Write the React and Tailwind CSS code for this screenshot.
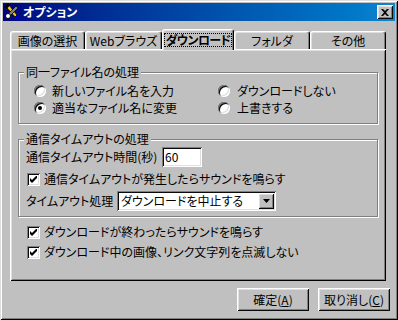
import React from "react";

const raised =
  "shadow-[inset_1px_1px_#fff,inset_-1px_-1px_#0a0a0a,inset_2px_2px_#dfdfdf,inset_-2px_-2px_#808080]";
const sunken =
  "shadow-[inset_1px_1px_#808080,inset_-1px_-1px_#fff,inset_2px_2px_#0a0a0a,inset_-2px_-2px_#dfdfdf]";
const etched = "border border-[#808080] shadow-[1px_1px_0_#fff,inset_1px_1px_0_#fff]";

const Radio = ({ checked }) => (
  <span className={`w-[12px] h-[12px] rounded-full bg-white shrink-0 flex items-center justify-center ${sunken}`}>
    {checked && <span className="w-[4px] h-[4px] rounded-full bg-black" />}
  </span>
);

const Check = () => (
  <span className={`w-[13px] h-[13px] bg-white shrink-0 flex items-center justify-center ${sunken}`}>
    <svg width="7" height="7" viewBox="0 0 7 7">
      <path d="M0 2 L2 4 L6 0 L7 0 L7 2 L2 7 L0 5 Z" fill="#000" />
    </svg>
  </span>
);

const Group = ({ title, className, children }) => (
  <div className={`relative ${etched} ${className}`}>
    <span className="absolute -top-[8px] left-[5px] px-[2px] bg-[#c0c0c0] leading-[14px]">{title}</span>
    {children}
  </div>
);

const Tab = ({ label, w, selected }) => (
  <div
    className={`${w} flex items-center justify-center bg-[#c0c0c0] rounded-t-[3px] border-l border-t border-white border-r border-r-black shadow-[inset_-1px_0_#808080,inset_1px_1px_#dfdfdf] ${
      selected ? "h-[21px] -mb-[1px] relative z-10" : "h-[18px]"
    }`}
  >
    {selected ? (
      <span className="outline-1 outline-dotted outline-black px-[1px] leading-[12px] font-bold tracking-[-0.6px]">{label}</span>
    ) : (
      label
    )}
  </div>
);

const TitleIcon = () => (
  <svg width="16" height="16" viewBox="0 0 16 16">
    <path d="M2 1 L5 1 L13 11 L11 13 L3 4 Z" fill="#e8c020" stroke="#000" strokeWidth="0.8" />
    <rect x="1" y="1" width="5" height="3" fill="#000" transform="rotate(-40 3 3)" />
    <path d="M12 2 L14 4 L6 12 L4 10 Z" fill="#808080" stroke="#000" strokeWidth="0.8" />
    <circle cx="4" cy="12" r="2.5" fill="#fff" stroke="#000" strokeWidth="1" />
    <rect x="11" y="12" width="5" height="4" fill="#0000c0" />
  </svg>
);

export default function App() {
  return (
    <div className="w-[398px] h-[320px] bg-[#c0c0c0] p-[3px] flex flex-col whitespace-nowrap text-[12px] leading-[14px] text-black font-['Noto_Sans_CJK_JP',sans-serif] [font-feature-settings:'palt'] shadow-[inset_1px_1px_#dfdfdf,inset_-1px_-1px_#000,inset_2px_2px_#fff,inset_-2px_-2px_#808080]">
      <div className="h-[18px] bg-linear-to-r from-[#000080] to-[#1084d0] flex items-center pl-[1px] pr-[2px]">
        <TitleIcon />
        <span className="ml-[3px] text-white font-bold">オプション</span>
        <button className={`ml-auto w-[16px] h-[14px] bg-[#c0c0c0] flex items-center justify-center ${raised}`}>
          <svg width="8" height="7" viewBox="0 0 8 7">
            <path d="M0 0h2l2 2 2-2h2L5 3.5 8 7H6L4 5 2 7H0l3-3.5z" fill="#000" />
          </svg>
        </button>
      </div>

      <div className="mt-[7px] ml-[7px] flex items-end h-[21px]">
        <Tab label="画像の選択" w="w-[75px]" />
        <Tab label="Webブラウズ" w="w-[77px]" />
        <Tab label="ダウンロード" w="w-[72px]" selected />
        <Tab label="フォルダ" w="w-[76px]" />
        <Tab label="その他" w="w-[76px]" />
      </div>

      <div className="ml-[7px] w-[376px] h-[232px] pt-[23px] px-[8px] flex flex-col shadow-[inset_1px_1px_#fff,inset_-1px_-1px_#000,inset_2px_2px_#dfdfdf,inset_-2px_-2px_#808080]">
        <Group title="同一ファイル名の処理" className="h-[52px] pt-[9px] pl-[15px]">
          <div className="grid grid-cols-[184px_1fr] auto-rows-[17px]">
            <label className="flex items-center gap-[6px]"><Radio />新しいファイル名を入力</label>
            <label className="flex items-center gap-[7px]"><Radio />ダウンロードしない</label>
            <label className="flex items-center gap-[6px]"><Radio checked />適当なファイル名に変更</label>
            <label className="flex items-center gap-[7px]"><Radio />上書きする</label>
          </div>
        </Group>

        <Group title="通信タイムアウトの処理" className="mt-[15px] h-[78px] pt-[7px] pl-[7px] flex flex-col gap-[3px]">
          <div className="flex items-center h-[20px]">
            <span className="w-[136px]">通信タイムアウト時間(秒)</span>
            <div className={`w-[40px] h-[20px] bg-white flex items-center pl-[3px] ${sunken}`}>60</div>
          </div>
          <label className="flex items-center h-[18px] ml-[1px] gap-[4px]"><Check />通信タイムアウトが発生したらサウンドを鳴らす</label>
          <div className="flex items-center h-[20px]">
            <span className="w-[91px]">タイムアウト処理</span>
            <div className={`w-[159px] h-[20px] bg-white flex items-center p-[2px] ${sunken}`}>
              <span className="flex-1 pl-[2px]">ダウンロードを中止する</span>
              <span className={`w-[16px] h-[16px] bg-[#c0c0c0] flex items-center justify-center ${raised}`}>
                <svg width="7" height="4" viewBox="0 0 7 4"><path d="M0 0h7L3.5 4z" fill="#000" /></svg>
              </span>
            </div>
          </div>
        </Group>

        <div className="mt-[6px] ml-[9px] flex flex-col gap-[2px]">
          <label className="flex items-center h-[18px] gap-[4px]"><Check />ダウンロードが終わったらサウンドを鳴らす</label>
          <label className="flex items-center h-[18px] gap-[4px]"><Check />ダウンロード中の画像、リンク文字列を点滅しない</label>
        </div>
      </div>

      <div className="mt-[7px] flex justify-end gap-[9px] pr-[5px]">
        <button className={`w-[72px] h-[23px] bg-[#c0c0c0] ${raised}`}>確定(<span className="underline">A</span>)</button>
        <button className={`w-[72px] h-[23px] bg-[#c0c0c0] ${raised}`}>取り消し(<span className="underline">C</span>)</button>
      </div>
    </div>
  );
}
